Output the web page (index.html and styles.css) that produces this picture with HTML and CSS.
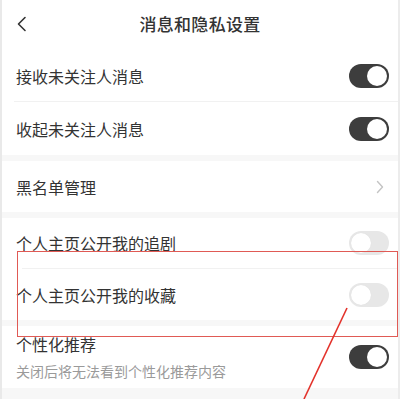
FILE: index.html
```html
<!DOCTYPE html>
<html lang="zh">
<head>
<meta charset="utf-8">
<link rel="stylesheet" href="styles.css">
</head>
<body>
<div class="page">
  <header class="topbar">
    <svg class="back" width="12" height="16" viewBox="0 0 12 16"><path d="M9 1.5 L2.5 8 L9 14.5" fill="none" stroke="#333" stroke-width="1.6" stroke-linecap="round" stroke-linejoin="round"/></svg>
    <h1 class="title">消息和隐私设置</h1>
  </header>

  <section class="group">
    <div class="row r1">
      <span class="label">接收未关注人消息</span>
      <span class="toggle on"><span class="knob"></span></span>
    </div>
    <div class="divider"></div>
    <div class="row r2">
      <span class="label">收起未关注人消息</span>
      <span class="toggle on"><span class="knob"></span></span>
    </div>
  </section>

  <div class="gap g1"></div>

  <section class="group">
    <div class="row r3">
      <span class="label">黑名单管理</span>
      <svg class="chev" width="8" height="14" viewBox="0 0 8 14"><path d="M1.5 1.5 L6.5 7 L1.5 12.5" fill="none" stroke="#c4c4c4" stroke-width="1.4" stroke-linecap="round" stroke-linejoin="round"/></svg>
    </div>
  </section>

  <div class="gap g2"></div>

  <section class="group">
    <div class="row r4">
      <span class="label">个人主页公开我的追剧</span>
      <span class="toggle off"><span class="knob"></span></span>
    </div>
    <div class="divider d2"></div>
    <div class="row r5">
      <span class="label">个人主页公开我的收藏</span>
      <span class="toggle off"><span class="knob"></span></span>
    </div>
  </section>

  <div class="gap g3"></div>

  <section class="group">
    <div class="row r6">
      <div class="texts">
        <span class="label">个性化推荐</span>
        <span class="sub">关闭后将无法看到个性化推荐内容</span>
      </div>
      <span class="toggle on"><span class="knob"></span></span>
    </div>
  </section>

  <div class="gap g4"></div>

  <div class="highlight"></div>
  <svg class="arrow" width="400" height="399" viewBox="0 0 400 399"><line x1="347" y1="308" x2="304" y2="399" stroke="#e3322b" stroke-width="1.6"/></svg>
</div>
</body>
</html>
```

FILE: styles.css
```css
* { box-sizing: border-box; margin: 0; padding: 0; }
html, body { width: 400px; height: 399px; overflow: hidden; background: #fff; }
body { font-family: "Noto Sans CJK SC", "Noto Sans", sans-serif; color: #333; }
.page {
  position: relative;
  width: 400px;
  height: 399px;
  border-left: 2px solid #e9e9e9;
  border-right: 2px solid #ececec;
  display: flex;
  flex-direction: column;
  overflow: hidden;
}
.topbar {
  height: 50px;
  display: flex;
  align-items: center;
  justify-content: center;
  position: relative;
  padding-bottom: 4px;
}
.back { position: absolute; left: 14px; top: 16px; }
.title { font-size: 17px; font-weight: 500; color: #333; letter-spacing: 0.3px; }
.group { background: #fff; }
.row {
  display: flex;
  align-items: center;
  justify-content: space-between;
  padding: 0 9px 0 14px;
}
.r1 { height: 51px; }
.r2 { height: 53px; }
.r3 { height: 51px; padding-right: 14px; }
.r4 { height: 50px; }
.r5 { height: 51px; }
.r6 { height: 62px; }
.divider { height: 1px; margin-left: 12px; background: #f1f1f1; }
.d2 { margin-left: 20px; }
.gap { background: #f7f7f7; }
.g1 { height: 6px; }
.g2 { height: 6px; }
.g3 { height: 6px; }
.g4 { flex: 1; }
.label { font-size: 16px; color: #333; line-height: 22px; }
.texts { display: flex; flex-direction: column; gap: 6px; }
.sub { font-size: 14px; color: #9a9a9a; line-height: 20px; }
.toggle {
  width: 40px;
  height: 24px;
  border-radius: 12px;
  display: flex;
  align-items: center;
  padding: 2px;
}
.toggle.on { background: #3d3d3d; justify-content: flex-end; }
.toggle.off { background: #e7e7e7; justify-content: flex-start; }
.knob {
  width: 20px;
  height: 20px;
  border-radius: 50%;
  background: #fff;
}
.toggle.off .knob { box-shadow: 0 0 1px rgba(0,0,0,0.08); }
.highlight {
  position: absolute;
  left: 15px;
  top: 251px;
  width: 381px;
  height: 86px;
  border: 1.5px solid #e05a55;
  pointer-events: none;
}
.arrow { position: absolute; left: -2px; top: 0; pointer-events: none; }
```
